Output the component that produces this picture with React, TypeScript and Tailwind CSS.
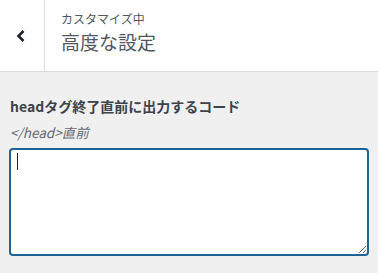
import React from 'react';

export default function App() {
  return (
    <div
      className="w-[378px] h-[273px] bg-[#f0f0f1] overflow-hidden"
      style={{ fontFamily: '"Noto Sans CJK JP", "Liberation Sans", sans-serif' }}
    >
      {/* Header */}
      <div className="flex h-[72px] bg-white border-b border-[#dcdcde]">
        <button className="w-[45px] flex items-center justify-center border-r border-[#dcdcde] text-[#1d2327]">
          <svg width="12" height="14" viewBox="0 0 12 14" className="mr-[3px]">
            <path d="M8.5 2 L3.5 7 L8.5 12" fill="none" stroke="currentColor" strokeWidth="2.6" />
          </svg>
        </button>
        <div className="flex flex-col pl-[16px] pt-[10px]">
          <span className="text-[12px] leading-[18px] text-[#50575e]">カスタマイズ中</span>
          <span className="text-[19px] leading-[28px] text-[#50575e]">高度な設定</span>
        </div>
      </div>

      {/* Body */}
      <div className="px-[9px] pt-[24px]">
        <div className="pl-[1px] text-[14px] leading-[20px] font-bold text-[#3c434a]">
          headタグ終了直前に出力するコード
        </div>
        <div className="pl-[1px] mt-[6px] text-[13.5px] leading-[20px] italic text-[#646970]">
          &lt;/head&gt;直前
        </div>
        <div className="relative mt-[6px] w-[360px]">
          <textarea
            className="block w-[360px] h-[108px] bg-white border-2 border-[#1f6394] rounded-[4px] outline-none resize-y px-[6px] py-[4px] text-[14px]"
            defaultValue=""
          />
          {/* caret */}
          <span className="absolute left-[8px] top-[5px] w-[1px] h-[17px] bg-[#1d2327]" />
        </div>
      </div>
    </div>
  );
}
